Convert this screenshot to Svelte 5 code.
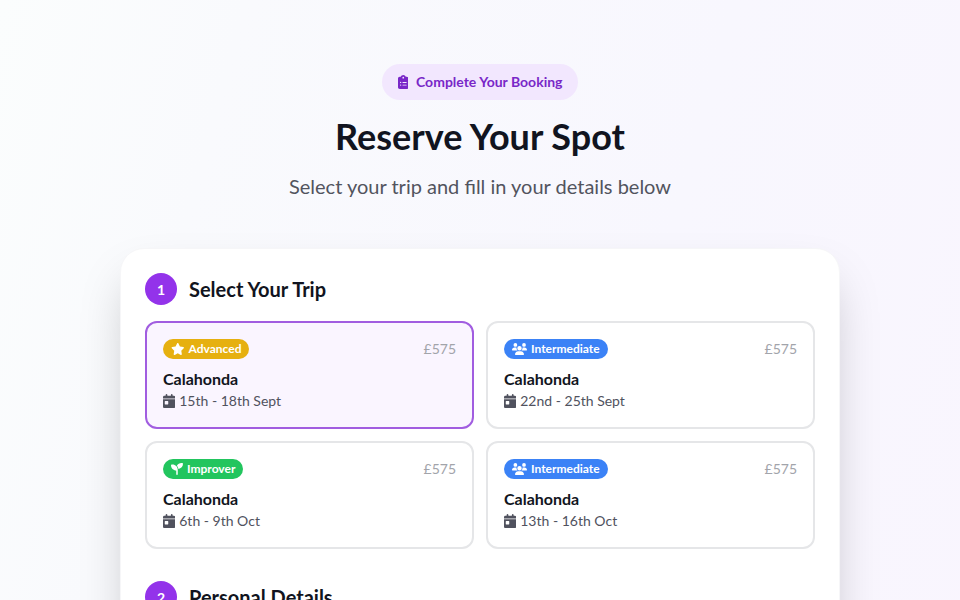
<script>
  const icons = {
    clipboard: {
      box: '0 0 384 512',
      path: 'M192 0c-41.8 0-77.4 26.7-90.5 64H64C28.7 64 0 92.7 0 128V448c0 35.3 28.7 64 64 64H320c35.3 0 64-28.7 64-64V128c0-35.3-28.7-64-64-64H282.5C269.4 26.7 233.8 0 192 0zm0 64a32 32 0 1 1 0 64 32 32 0 1 1 0-64zM72 272a24 24 0 1 1 48 0 24 24 0 1 1 -48 0zm104-16H304c8.8 0 16 7.2 16 16s-7.2 16-16 16H176c-8.8 0-16-7.2-16-16s7.2-16 16-16zM72 368a24 24 0 1 1 48 0 24 24 0 1 1 -48 0zm88 0c0-8.8 7.2-16 16-16H304c8.8 0 16 7.2 16 16s-7.2 16-16 16H176c-8.8 0-16-7.2-16-16z',
    },
    star: {
      box: '0 0 576 512',
      path: 'M316.9 18C311.6 7 300.4 0 288.1 0s-23.4 7-28.8 18L195 150.3 51.4 171.5c-12 1.8-22 10.2-25.7 21.7s-.7 24.2 7.9 32.7L137.8 329 113.2 474.7c-2 12 3 24.2 12.9 31.3s23 8 33.8 2.3l128.3-68.5 128.3 68.5c10.8 5.7 23.9 4.9 33.8-2.3s14.9-19.3 12.9-31.3L438.5 329 542.7 225.9c8.6-8.5 11.7-21.2 7.9-32.7s-13.7-19.9-25.7-21.7L381.2 150.3 316.9 18z',
    },
    users: {
      box: '0 0 640 512',
      path: 'M144 0a80 80 0 1 1 0 160A80 80 0 1 1 144 0zM512 0a80 80 0 1 1 0 160A80 80 0 1 1 512 0zM0 298.7C0 239.8 47.8 192 106.7 192h42.7c15.9 0 31 3.5 44.6 9.7c-1.3 7.2-1.9 14.7-1.9 22.3c0 38.2 16.8 72.5 43.3 96c-.2 0-.4 0-.7 0H21.3C9.6 320 0 310.4 0 298.7zM405.3 320c-.2 0-.4 0-.7 0c26.6-23.5 43.3-57.8 43.3-96c0-7.6-.7-15-1.9-22.3c13.6-6.3 28.7-9.7 44.6-9.7h42.7C592.2 192 640 239.8 640 298.7c0 11.8-9.6 21.3-21.3 21.3H405.3zM224 224a96 96 0 1 1 192 0 96 96 0 1 1 -192 0zM128 485.3C128 411.7 187.7 352 261.3 352H378.7C452.3 352 512 411.7 512 485.3c0 14.7-11.9 26.7-26.7 26.7H154.7c-14.7 0-26.7-11.9-26.7-26.7z',
    },
    seedling: {
      box: '0 0 512 512',
      path: 'M512 32c0 113.6-84.6 207.5-194.2 222c-7.1-53.4-30.6-101.6-65.3-139.3C290.8 46.3 364 0 448 0h32c17.7 0 32 14.3 32 32zM0 96C0 78.3 14.3 64 32 64H64c123.7 0 224 100.3 224 224v32V480c0 17.7-14.3 32-32 32s-32-14.3-32-32V320C100.3 320 0 219.7 0 96z',
    },
    calendar: {
      box: '0 0 448 512',
      path: 'M128 0c17.7 0 32 14.3 32 32V64H288V32c0-17.7 14.3-32 32-32s32 14.3 32 32V64h48c26.5 0 48 21.5 48 48v48H0V112C0 85.5 21.5 64 48 64H96V32c0-17.7 14.3-32 32-32zM0 192H448V464c0 26.5-21.5 48-48 48H48c-26.5 0-48-21.5-48-48V192zm80 64c-8.8 0-16 7.2-16 16v96c0 8.8 7.2 16 16 16h96c8.8 0 16-7.2 16-16V272c0-8.8-7.2-16-16-16H80z',
    },
  };

  const trips = [
    { level: 'Advanced', tone: 'yellow', icon: 'star', dates: '15th - 18th Sept' },
    { level: 'Intermediate', tone: 'blue', icon: 'users', dates: '22nd - 25th Sept' },
    { level: 'Improver', tone: 'green', icon: 'seedling', dates: '6th - 9th Oct' },
    { level: 'Intermediate', tone: 'blue', icon: 'users', dates: '13th - 16th Oct' },
  ];

  let selected = $state(0);
</script>

{#snippet icon(name)}
  <svg class="icon" viewBox={icons[name].box} aria-hidden="true"><path d={icons[name].path} /></svg>
{/snippet}

<main class="page">
  <header class="intro">
    <p class="tag">{@render icon('clipboard')}<span>Complete Your Booking</span></p>
    <h1>Reserve Your Spot</h1>
    <p class="lead">Select your trip and fill in your details below</p>
  </header>

  <div class="panel">
    <section>
      <div class="step">
        <span class="number">1</span>
        <h2>Select Your Trip</h2>
      </div>
      <div class="trips">
        {#each trips as trip, i}
          <button
            type="button"
            class="trip"
            class:selected={selected === i}
            aria-pressed={selected === i}
            onclick={() => (selected = i)}
          >
            <span class="top">
              <span class="badge {trip.tone}">{@render icon(trip.icon)}<span>{trip.level}</span></span>
              <span class="price">£575</span>
            </span>
            <span class="place">Calahonda</span>
            <span class="dates">{@render icon('calendar')}<span>{trip.dates}</span></span>
          </button>
        {/each}
      </div>
    </section>

    <section class="details">
      <div class="step">
        <span class="number">2</span>
        <h2>Personal Details</h2>
      </div>
    </section>
  </div>
</main>

<style>
  :global(body) {
    margin: 0;
    font-family: Lato, 'Noto Sans', sans-serif;
    color: #111420;
  }

  .page {
    box-sizing: border-box;
    min-height: 100vh;
    padding: 64px 16px;
    background: linear-gradient(105deg, #fbfdfd, #f9fafd 20%, #f8f7fe 60%, #f9f5fe);
  }

  h1,
  h2,
  p {
    margin: 0;
  }

  .icon {
    display: block;
    height: 1em;
    flex: none;
    fill: currentColor;
  }

  .intro {
    display: flex;
    flex-direction: column;
    align-items: center;
    gap: 16px;
    margin-bottom: 48px;
    text-align: center;
  }

  .tag {
    display: flex;
    align-items: center;
    gap: 8px;
    padding: 8px 16px;
    border-radius: 18px;
    background: #f2e7fe;
    color: #7927c8;
    font-size: 14px;
    line-height: 20px;
    font-weight: 700;
  }

  h1 {
    font-size: 36px;
    line-height: 40px;
    font-weight: 700;
  }

  .lead {
    color: #52545e;
    font-size: 20px;
    line-height: 28px;
  }

  .panel {
    box-sizing: border-box;
    max-width: 720px;
    margin: 0 auto;
    padding: 24px;
    border: 1px solid #f6f6f8;
    border-radius: 24px;
    background: #fff;
    box-shadow: 0 25px 50px -12px rgba(0, 0, 0, 0.25);
  }

  .step {
    display: flex;
    align-items: center;
    gap: 12px;
    margin-bottom: 16px;
  }

  .number {
    display: flex;
    align-items: center;
    justify-content: center;
    width: 32px;
    height: 32px;
    border-radius: 50%;
    background: #9333ea;
    color: #fff;
    font-size: 14px;
    font-weight: 700;
  }

  h2 {
    font-size: 20px;
    line-height: 28px;
    font-weight: 700;
  }

  .trips {
    display: grid;
    grid-template-columns: repeat(auto-fit, minmax(260px, 1fr));
    gap: 12px;
  }

  .trip {
    display: flex;
    flex-direction: column;
    padding: 16px;
    border: 2px solid #e5e6e8;
    border-radius: 12px;
    background: #fff;
    color: inherit;
    font: inherit;
    text-align: left;
    cursor: pointer;
  }

  .trip.selected {
    border-color: #a15de0;
    background: #faf5ff;
  }

  .top {
    display: flex;
    align-items: center;
    justify-content: space-between;
    margin-bottom: 8px;
  }

  .badge {
    display: flex;
    align-items: center;
    gap: 4px;
    padding: 2px 8px;
    border-radius: 10px;
    color: #fff;
    font-size: 12px;
    line-height: 16px;
    font-weight: 700;
  }

  .yellow {
    background: #e6b010;
  }

  .blue {
    background: #3b82f6;
  }

  .green {
    background: #22c55e;
  }

  .price {
    color: #a2a4aa;
    font-size: 14px;
    line-height: 20px;
  }

  .place {
    font-size: 16px;
    line-height: 24px;
    font-weight: 700;
  }

  .dates {
    display: flex;
    align-items: center;
    gap: 4px;
    color: #50525e;
    font-size: 14px;
    line-height: 20px;
  }

  .details {
    min-height: 320px;
    margin-top: 32px;
  }
</style>
